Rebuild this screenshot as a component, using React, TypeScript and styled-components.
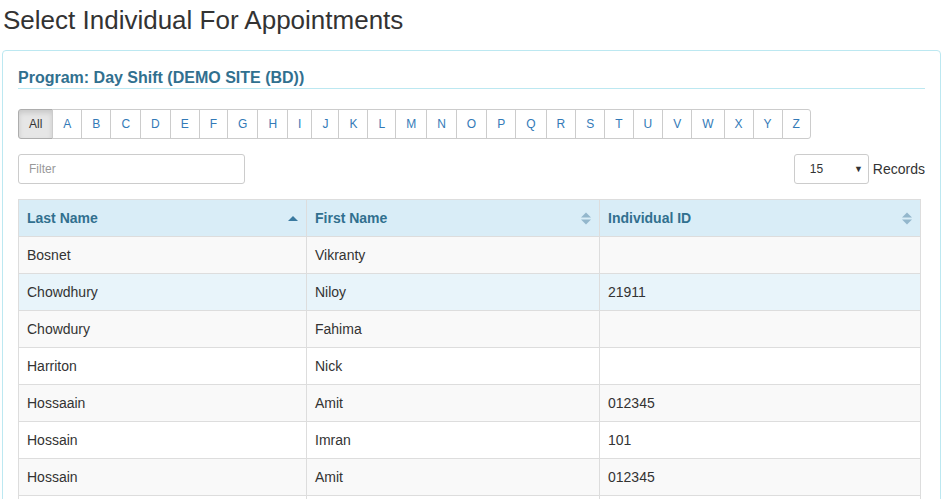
import React, { useState } from 'react';
import styled, { createGlobalStyle } from 'styled-components';

interface IRow {
  last: string;
  first: string;
  id: string;
}

const LETTERS = ['All', ...'ABCDEFGHIJKLMNOPQRSTUVWXYZ'.split('')];

const ROWS: IRow[] = [
  { last: 'Bosnet', first: 'Vikranty', id: '' },
  { last: 'Chowdhury', first: 'Niloy', id: '21911' },
  { last: 'Chowdury', first: 'Fahima', id: '' },
  { last: 'Harriton', first: 'Nick', id: '' },
  { last: 'Hossaain', first: 'Amit', id: '012345' },
  { last: 'Hossain', first: 'Imran', id: '101' },
  { last: 'Hossain', first: 'Amit', id: '012345' },
  { last: 'Hossain', first: 'Jahid', id: '' },
];

const SortIcon = ({ dir }: { dir?: 'asc' }) =>
  dir === 'asc' ? (
    <svg width="10" height="6" viewBox="0 0 10 6">
      <path d="M0 6 L5 1 L10 6 Z" fill="#3a7aa0" />
    </svg>
  ) : (
    <svg width="10" height="13" viewBox="0 0 10 13">
      <path d="M0 5.5 L5 0.5 L10 5.5 Z" fill="#93b7cc" />
      <path d="M0 7.5 L5 12.5 L10 7.5 Z" fill="#93b7cc" />
    </svg>
  );

const App = () => {
  const [active, setActive] = useState('All');

  return (
    <>
      <GlobalStyle />
      <Page>
        <Title>Select Individual For Appointments</Title>
        <Panel>
          <ProgramHeading>Program: Day Shift (DEMO SITE (BD))</ProgramHeading>
          <LetterGroup>
            {LETTERS.map(l => (
              <LetterButton key={l} active={l === active} onClick={() => setActive(l)}>
                {l}
              </LetterButton>
            ))}
          </LetterGroup>
          <Toolbar>
            <FilterInput placeholder="Filter" />
            <RecordsBox>
              <PageSize>
                <span>15</span>
                <Caret>▼</Caret>
              </PageSize>
              Records
            </RecordsBox>
          </Toolbar>
          <Table>
            <thead>
              <tr>
                <HeadCell style={{ width: 288 }}>
                  <HeadInner>
                    Last Name
                    <SortIcon dir="asc" />
                  </HeadInner>
                </HeadCell>
                <HeadCell style={{ width: 293 }}>
                  <HeadInner>
                    First Name
                    <SortIcon />
                  </HeadInner>
                </HeadCell>
                <HeadCell>
                  <HeadInner>
                    Individual ID
                    <SortIcon />
                  </HeadInner>
                </HeadCell>
              </tr>
            </thead>
            <tbody>
              {ROWS.map((r, i) => (
                <Row key={i} striped={i % 2 === 0} hovered={i === 1}>
                  <Cell>{r.last}</Cell>
                  <Cell>{r.first}</Cell>
                  <Cell>{r.id}</Cell>
                </Row>
              ))}
            </tbody>
          </Table>
        </Panel>
      </Page>
    </>
  );
};

const GlobalStyle = createGlobalStyle`
  body {
    margin: 0;
    background: #fff;
    font-family: 'Liberation Sans', Arial, sans-serif;
    font-size: 14px;
    color: #333;
  }
`;

const Page = styled.div`
  padding: 0 5px 0 2px;
  height: 499px;
  overflow: hidden;
`;

const Title = styled.h1`
  margin: 0;
  padding: 5px 0 0 1px;
  height: 50px;
  box-sizing: border-box;
  font-size: 26px;
  font-weight: 400;
  line-height: 30px;
  color: #333;
`;

const Panel = styled.div`
  border: 1px solid #bce8f1;
  border-radius: 4px;
  padding: 15px 15px 0;
  background: #fff;
`;

const ProgramHeading = styled.div`
  font-size: 16px;
  font-weight: 700;
  color: #31708f;
  line-height: 20px;
  padding: 2px 0 0;
  border-bottom: 1px solid #bce8f1;
  margin-bottom: 20px;
`;

const LetterGroup = styled.div`
  display: flex;
  height: 30px;
  margin-bottom: 15px;
`;

const LetterButton = styled.button<{ active: boolean }>`
  font-family: inherit;
  font-size: 12px;
  line-height: 18px;
  padding: 5px 10px;
  border: 1px solid #ccc;
  margin-left: -1px;
  background: ${({ active }) => (active ? '#e6e6e6' : '#fff')};
  color: ${({ active }) => (active ? '#333' : '#337ab7')};
  box-shadow: ${({ active }) => (active ? 'inset 0 3px 5px rgba(0,0,0,0.125)' : 'none')};
  cursor: pointer;
  &:first-child {
    margin-left: 0;
    border-radius: 3px 0 0 3px;
    border-color: ${({ active }) => (active ? '#adadad' : '#ccc')};
  }
  &:last-child {
    border-radius: 0 3px 3px 0;
  }
`;

const Toolbar = styled.div`
  display: flex;
  justify-content: space-between;
  align-items: center;
  margin-bottom: 15px;
`;

const FilterInput = styled.input`
  width: 227px;
  height: 30px;
  box-sizing: border-box;
  padding: 5px 10px;
  font-family: inherit;
  font-size: 12px;
  border: 1px solid #ccc;
  border-radius: 3px;
  outline: none;
  &::placeholder {
    color: #999;
  }
`;

const RecordsBox = styled.div`
  display: flex;
  align-items: center;
  gap: 4px;
  font-size: 14px;
  color: #333;
`;

const PageSize = styled.div`
  width: 75px;
  height: 30px;
  box-sizing: border-box;
  border: 1px solid #ccc;
  border-radius: 3px;
  display: flex;
  align-items: center;
  justify-content: space-between;
  padding: 0 5px 0 15px;
  font-size: 12px;
`;

const Caret = styled.span`
  font-size: 9px;
  color: #333;
`;

const Table = styled.table`
  width: 903px;
  border-collapse: collapse;
  border: 1px solid #ddd;
  table-layout: fixed;
`;

const HeadCell = styled.th`
  background: #d9edf7;
  color: #31708f;
  font-weight: 700;
  text-align: left;
  height: 37px;
  padding: 0 8px;
  border: 1px solid #ddd;
  box-sizing: border-box;
`;

const HeadInner = styled.div`
  display: flex;
  justify-content: space-between;
  align-items: center;
`;

const Row = styled.tr<{ striped: boolean; hovered: boolean }>`
  background: ${({ striped, hovered }) => (hovered ? '#e8f4fa' : striped ? '#f9f9f9' : '#fff')};
`;

const Cell = styled.td`
  height: 37px;
  padding: 0 8px;
  border: 1px solid #ddd;
  box-sizing: border-box;
  color: #333;
`;

export default App;
